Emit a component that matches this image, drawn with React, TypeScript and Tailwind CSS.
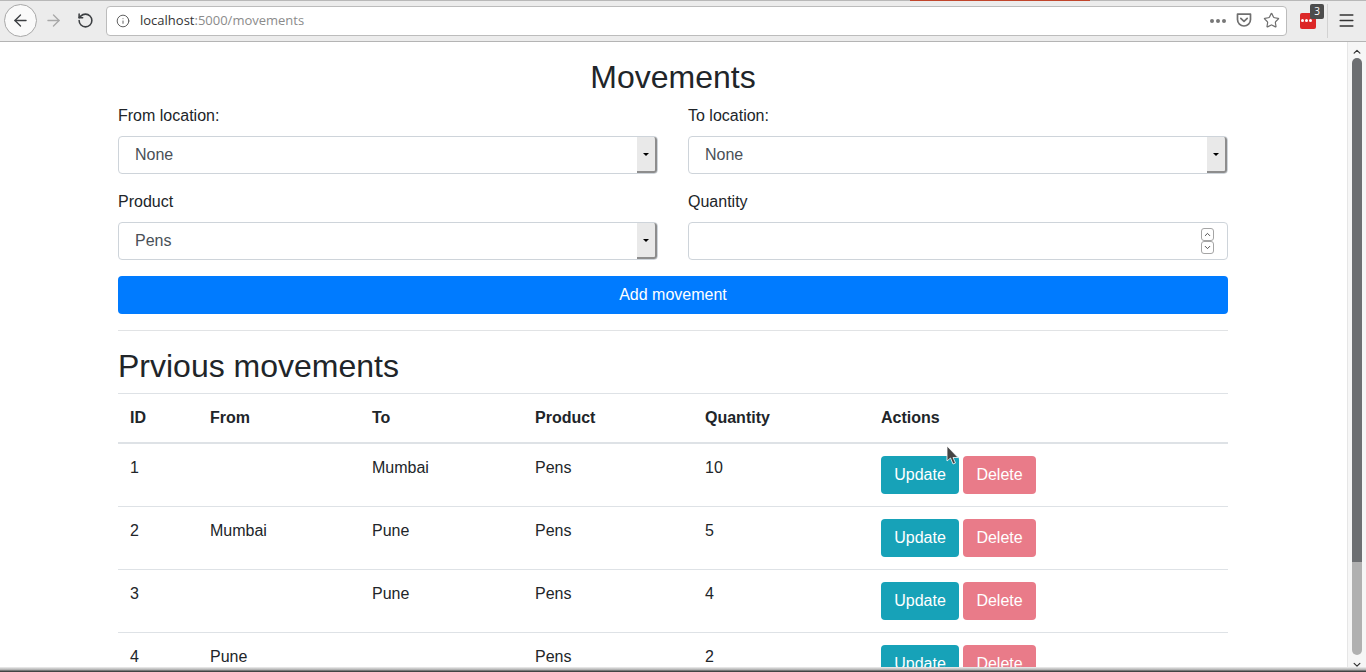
import { ArrowLeft, ArrowRight, RotateCw, Info, Star, Menu, ChevronUp, ChevronDown } from 'lucide-react'

const rows = [
  { id: 1, from: '', to: 'Mumbai', product: 'Pens', quantity: 10 },
  { id: 2, from: 'Mumbai', to: 'Pune', product: 'Pens', quantity: 5 },
  { id: 3, from: '', to: 'Pune', product: 'Pens', quantity: 4 },
  { id: 4, from: 'Pune', to: '', product: 'Pens', quantity: 2 },
]

function Toolbar() {
  return (
    <div className="relative h-[42px] shrink-0 border-b border-[#b4b4b4] bg-[#ececec] border-t-0 flex items-center font-['Open_Sans',sans-serif]">
      <div className="absolute left-0 top-0 right-0 h-px bg-[#b8b8b8]" />
      <div className="absolute left-[910px] top-0 h-px w-[180px] bg-[#c0452c]" />
      <div className="ml-[4px] flex h-[33px] w-[33px] items-center justify-center rounded-full border border-[#a8a8a8] bg-[#fafafa]">
        <ArrowLeft size={19} strokeWidth={1.7} className="text-[#3c3f42]" />
      </div>
      <ArrowRight size={19} strokeWidth={1.7} className="ml-[7px] text-[#a8a8a8]" />
      <RotateCw size={17} strokeWidth={2.2} className="ml-[14px] -scale-y-100 rotate-180 text-[#3c3f42]" />
      <div className="ml-[12px] flex h-[30px] w-[1181px] items-center rounded-[4px] border border-[#bcbcbc] bg-white">
        <Info size={14} strokeWidth={1.6} className="ml-[9px] text-[#555]" />
        <span className="ml-[10px] text-[13px] leading-none text-[#8b8b8b]">
          <span className="text-[#333]">localhost</span>:5000/movements
        </span>
        <div className="ml-auto mr-[6px] flex items-center">
          <div className="mr-[10px] flex gap-[2px]">
            <span className="h-[4px] w-[4px] rounded-full bg-[#777]" />
            <span className="h-[4px] w-[4px] rounded-full bg-[#777]" />
            <span className="h-[4px] w-[4px] rounded-full bg-[#777]" />
          </div>
          <svg width="16" height="15" viewBox="0 0 16 15" fill="none" stroke="#6f6f6f" strokeWidth="1.7" className="mr-[11px]">
            <path d="M1.5 1.2h13v5.3a6.5 6.5 0 0 1-13 0z" strokeLinejoin="round" />
            <path d="M4.8 5.3 8 8.3l3.2-3" strokeLinecap="round" strokeLinejoin="round" />
          </svg>
          <Star size={17} strokeWidth={1.7} className="text-[#6f6f6f]" />
        </div>
      </div>
      <div className="relative ml-[13px] h-[16px] w-[16px] rounded-[2px] bg-[#dc2727]">
        <div className="absolute left-[1px] top-[6px] flex gap-[1px]">
          <span className="h-[3px] w-[3px] rounded-full bg-white" />
          <span className="h-[3px] w-[3px] rounded-full bg-white" />
          <span className="h-[3px] w-[3px] rounded-full bg-white" />
        </div>
        <div className="absolute left-[10px] top-[-9px] flex h-[15px] w-[14px] items-center justify-center rounded-[2px] bg-[#4c4c4c] text-[10px] leading-none text-white">
          3
        </div>
      </div>
      <div className="ml-[11px] h-[34px] w-px bg-[#d2d2d2]" />
      <Menu size={19} strokeWidth={1.8} className="ml-[9px] text-[#333]" />
    </div>
  )
}

function SelectBox({ value }: { value: string }) {
  return (
    <div className="relative flex h-[38px] items-center rounded-[4px] border border-[#ced4da] bg-white pl-4 text-[#495057]">
      {value}
      <div className="absolute right-0 top-0 flex h-[36px] w-[20px] items-center justify-center rounded-br-[3px] rounded-tr-[3px] border-b-2 border-r-2 border-b-[#8d8d8d] border-r-[#8d8d8d] bg-[#e9e9e9]">
        <span className="h-0 w-0 border-x-[3px] border-t-[3px] border-x-transparent border-t-black" />
      </div>
    </div>
  )
}

function Field({ label, children }: { label: string; children: React.ReactNode }) {
  return (
    <div>
      <div className="mb-2 h-6">{label}</div>
      {children}
    </div>
  )
}

function Scrollbar() {
  return (
    <div className="flex w-[19px] shrink-0 flex-col items-center border-l border-[#e6e6e6] bg-[#f6f6f6]">
      <ChevronUp size={12} strokeWidth={2.5} className="mt-[4px] text-[#333]" />
      <div className="mt-[0px] flex w-[10px] flex-1 flex-col">
        <div className="mt-[0px] h-[504px] rounded-t-full bg-[#6d6f72]" />
        <div className="h-[93px] rounded-b-full bg-[#b0b0b0]" />
      </div>
      <ChevronDown size={12} strokeWidth={2.5} className="mb-[2px] mt-[4px] text-[#333]" />
    </div>
  )
}

export default function App() {
  return (
    <div className="relative flex h-[672px] w-[1366px] flex-col overflow-hidden bg-white font-['Liberation_Sans',sans-serif] text-base text-[#212529]">
      <Toolbar />
      <div className="flex min-h-0 flex-1">
        <div className="min-w-0 flex-1 overflow-hidden">
          <div className="ml-[118px] w-[1110px] pt-4">
            <h1 className="mb-2 h-[38px] text-center text-[32px] leading-[38px]">Movements</h1>
            <div className="grid grid-cols-2 gap-x-[30px] gap-y-4">
              <Field label="From location:"><SelectBox value="None" /></Field>
              <Field label="To location:"><SelectBox value="None" /></Field>
              <Field label="Product"><SelectBox value="Pens" /></Field>
              <Field label="Quantity">
                <div className="relative h-[38px] rounded-[4px] border border-[#ced4da] bg-white">
                  <div className="absolute right-[13px] top-[5px] flex flex-col">
                    <div className="flex h-[13px] w-[13px] items-center justify-center rounded-[3px] border border-[#a5a5a5]">
                      <ChevronUp size={9} strokeWidth={2.5} className="text-[#444]" />
                    </div>
                    <div className="flex h-[13px] w-[13px] items-center justify-center rounded-[3px] border border-[#a5a5a5]">
                      <ChevronDown size={9} strokeWidth={2.5} className="text-[#444]" />
                    </div>
                  </div>
                </div>
              </Field>
            </div>
            <button className="mt-4 block h-[38px] w-full rounded-[4px] bg-[#007bff] text-white">Add movement</button>
            <hr className="mt-4 border-[#e1e3e5]" />
            <h2 className="mb-2 mt-4 h-[38px] text-[32px] leading-[38px]">Prvious movements</h2>
            <table className="w-full table-fixed border-collapse">
              <colgroup>
                <col className="w-[80px]" />
                <col className="w-[162px]" />
                <col className="w-[163px]" />
                <col className="w-[170px]" />
                <col className="w-[176px]" />
                <col />
              </colgroup>
              <thead>
                <tr className="h-[49px] border-y border-[#dee2e6] border-b-2 text-left font-bold">
                  <th className="px-3 font-bold">ID</th>
                  <th className="px-3 font-bold">From</th>
                  <th className="px-3 font-bold">To</th>
                  <th className="px-3 font-bold">Product</th>
                  <th className="px-3 font-bold">Quantity</th>
                  <th className="px-3 font-bold">Actions</th>
                </tr>
              </thead>
              <tbody>
                {rows.map((r) => (
                  <tr key={r.id} className="border-b border-[#dee2e6] align-top">
                    <td className="p-3">{r.id}</td>
                    <td className="p-3">{r.from}</td>
                    <td className="p-3">{r.to}</td>
                    <td className="p-3">{r.product}</td>
                    <td className="p-3">{r.quantity}</td>
                    <td className="p-3">
                      <div className="flex gap-1">
                        <button className="h-[38px] w-[78px] rounded-[4px] bg-[#17a2b8] text-white">Update</button>
                        <button className="h-[38px] w-[73px] rounded-[4px] bg-[#e97b89] text-white">Delete</button>
                      </div>
                    </td>
                  </tr>
                ))}
              </tbody>
            </table>
          </div>
        </div>
        <Scrollbar />
      </div>
      <div className="absolute bottom-0 left-0 right-0 h-[5px] bg-gradient-to-b from-[#f0f0f0] via-[#b5b5b5] to-[#2a2a2a]" />
      <svg width="14" height="22" viewBox="0 0 14 22" className="absolute left-[946px] top-[445px]">
        <path d="M1 1v15l3.5-3 2.5 6 2.5-1-2.5-5.500h5z" fill="#444" stroke="#fff" strokeWidth="0.8" />
      </svg>
    </div>
  )
}
